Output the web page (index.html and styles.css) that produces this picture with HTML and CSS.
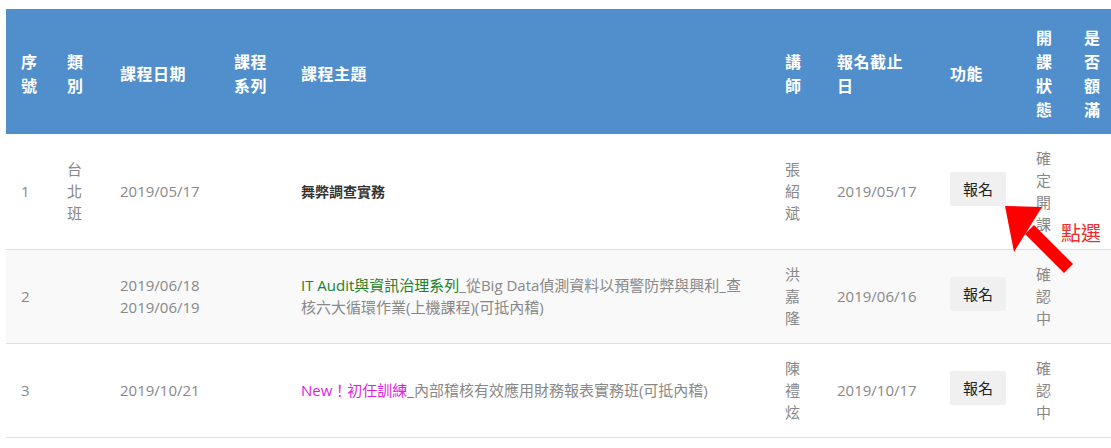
FILE: index.html
```html
<!DOCTYPE html>
<html lang="zh-Hant">
<head>
    <meta charset="UTF-8">
    <meta name="viewport" content="width=device-width, initial-scale=1.0">
    <title>課程報名</title>
    <link rel="stylesheet" href="styles.css">
</head>
<body>
    <div class="page">
        <table class="course-table">
            <colgroup>
                <col class="c-no">
                <col class="c-type">
                <col class="c-date">
                <col class="c-series">
                <col class="c-title">
                <col class="c-teacher">
                <col class="c-deadline">
                <col class="c-action">
                <col class="c-status">
                <col class="c-full">
            </colgroup>
            <thead>
                <tr>
                    <th>序號</th>
                    <th>類別</th>
                    <th>課程日期</th>
                    <th>課程系列</th>
                    <th>課程主題</th>
                    <th>講師</th>
                    <th class="th-deadline">報名截止日</th>
                    <th>功能</th>
                    <th>開課狀態</th>
                    <th>是否額滿</th>
                </tr>
            </thead>
            <tbody>
                <tr>
                    <td>1</td>
                    <td>台北班</td>
                    <td class="date">2019/05/17</td>
                    <td></td>
                    <td><span class="title-bold">舞弊調查實務</span></td>
                    <td>張紹斌</td>
                    <td class="date">2019/05/17</td>
                    <td><button class="btn">報名</button></td>
                    <td>確定開課</td>
                    <td></td>
                </tr>
                <tr class="striped">
                    <td>2</td>
                    <td></td>
                    <td class="date">2019/06/18<br>2019/06/19</td>
                    <td></td>
                    <td><span class="tag-green">IT Audit與資訊治理系列</span>_從Big Data偵測資料以預警防弊與興利_查核六大循環作業(上機課程)(可抵內稽)</td>
                    <td>洪嘉隆</td>
                    <td class="date">2019/06/16</td>
                    <td><button class="btn">報名</button></td>
                    <td>確認中</td>
                    <td></td>
                </tr>
                <tr>
                    <td>3</td>
                    <td></td>
                    <td class="date">2019/10/21</td>
                    <td></td>
                    <td><span class="tag-pink">New！初任訓練_</span>內部稽核有效應用財務報表實務班(可抵內稽)</td>
                    <td>陳禮炫</td>
                    <td class="date">2019/10/17</td>
                    <td><button class="btn">報名</button></td>
                    <td>確認中</td>
                    <td></td>
                </tr>
            </tbody>
        </table>

        <svg class="hint-arrow" width="80" height="80" viewBox="0 0 80 80">
            <polygon points="5,6 42,7 14,52" fill="#ff0000"/>
            <polygon points="34,25 73,64 64,73 25,34" fill="#ff0000"/>
        </svg>
        <span class="hint-text">點選</span>
    </div>
</body>
</html>
```

FILE: styles.css
```css
body {
    margin: 0;
    padding: 0;
    background: #fff;
    overflow: hidden;
    font-family: "Open Sans", "Noto Sans CJK TC", sans-serif;
}
.page {
    position: relative;
    padding: 9px 0 0 6px;
}
.course-table {
    table-layout: fixed;
    border-collapse: collapse;
    width: 1109px;
}
.c-no { width: 46px; }
.c-type { width: 53px; }
.c-date { width: 114px; }
.c-series { width: 67px; }
.c-title { width: 484px; }
.c-teacher { width: 52px; }
.c-deadline { width: 113px; }
.c-action { width: 86px; }
.c-status { width: 48px; }
.c-full { width: 46px; }
.course-table th {
    background: #508fcb;
    color: #fff;
    font-size: 16px;
    font-weight: bold;
    line-height: 24px;
    letter-spacing: 0.5px;
    text-align: left;
    vertical-align: middle;
    padding: 16px 15px 13px;
    font-family: "Noto Sans CJK TC", sans-serif;
}
.course-table th.th-deadline {
    padding-right: 19px;
}
.course-table td {
    color: #888;
    font-size: 15px;
    line-height: 22px;
    padding: 13px 15px 14px;
    vertical-align: middle;
    border-bottom: 1px solid #e0e0e0;
    word-break: break-all;
}
.course-table tr.striped td {
    background: #f9f9f9;
}
.course-table td.date {
    white-space: nowrap;
    word-break: normal;
}
.title-bold {
    color: #333;
    font-weight: bold;
    font-size: 14px;
}
.tag-green {
    color: #23802a;
}
.tag-pink {
    color: #e01ee0;
}
.btn {
    font-family: "Noto Sans CJK TC", sans-serif;
    font-size: 15px;
    line-height: 22px;
    color: #222;
    background: #f0f0f0;
    border: none;
    border-radius: 2px;
    padding: 6px 13px;
    margin-top: -4px;
    cursor: pointer;
}
.btn:hover {
    background: #e4e4e4;
}
.hint-arrow {
    position: absolute;
    left: 1000px;
    top: 200px;
}
.hint-text {
    position: absolute;
    left: 1061px;
    top: 220px;
    color: #e8302f;
    font-size: 20px;
    line-height: 26px;
    font-family: "Noto Sans CJK TC", sans-serif;
}
```
